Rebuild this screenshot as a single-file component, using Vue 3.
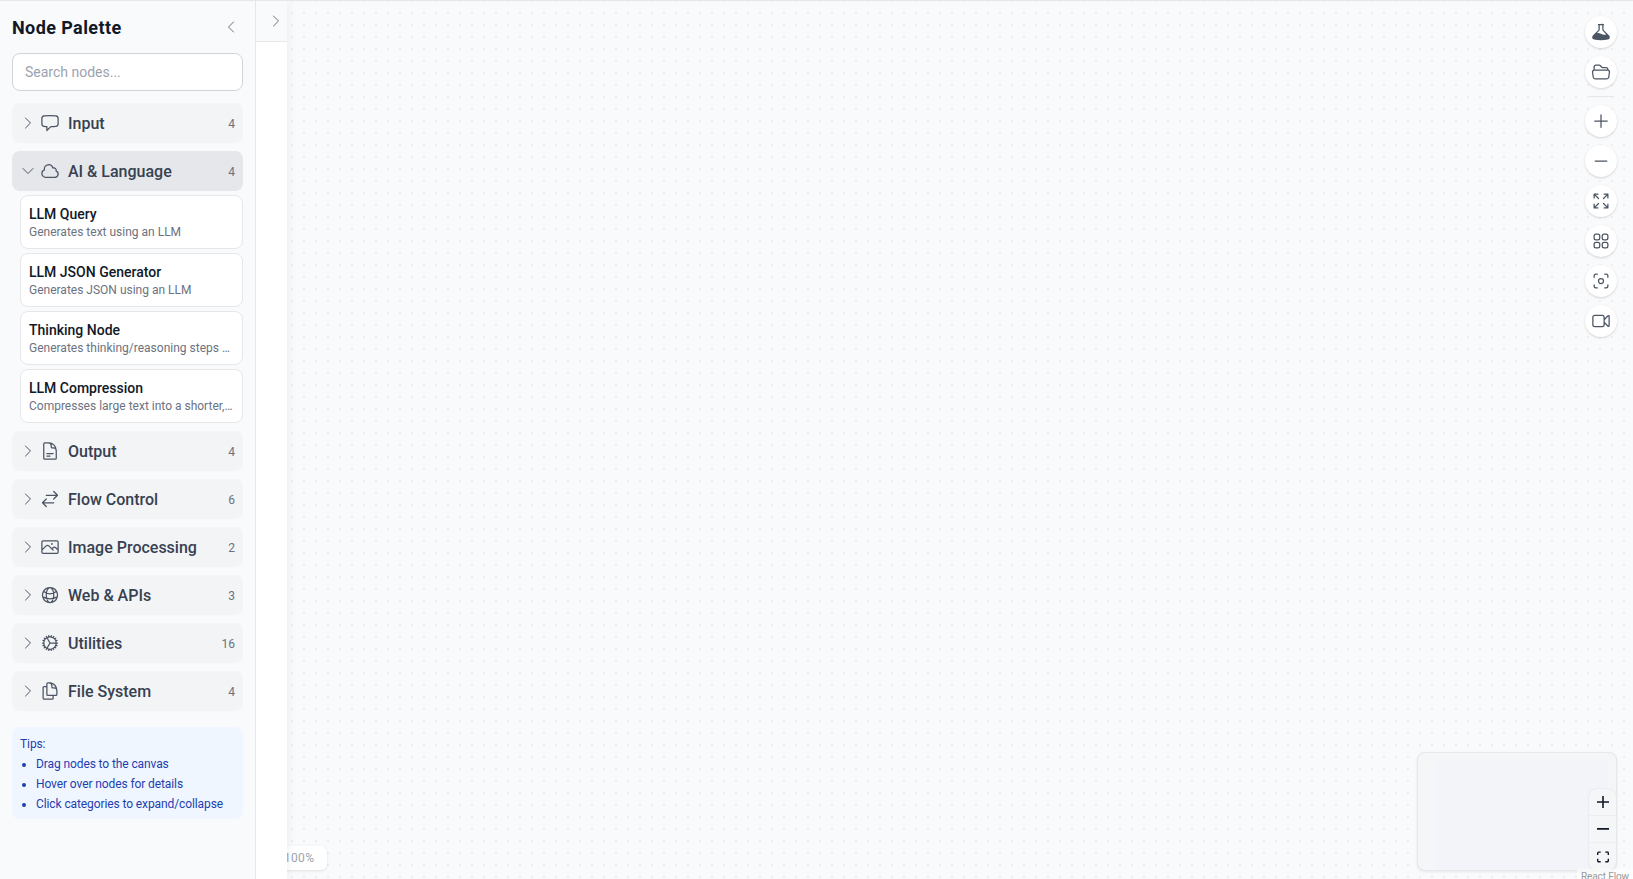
<template>
  <div class="app">
    <aside class="palette">
      <div class="palette-head">
        <h2>Node Palette</h2>
        <button class="collapse" type="button">
          <svg class="ico16" viewBox="0 0 24 24"><path :d="icons.left" /></svg>
        </button>
      </div>

      <input class="search" type="text" placeholder="Search nodes..." />

      <div class="cats">
        <section v-for="cat in categories" :key="cat.name" class="cat">
          <button class="cat-row" :class="{ open: openCat === cat.name }" type="button" @click="toggle(cat.name)">
            <svg class="ico16" viewBox="0 0 24 24"><path :d="openCat === cat.name ? icons.down : icons.right" /></svg>
            <svg class="ico20" viewBox="0 0 24 24"><path :d="cat.icon" /></svg>
            <span class="cat-name">{{ cat.name }}</span>
            <span class="cat-count">{{ cat.count }}</span>
          </button>
          <div v-if="openCat === cat.name && cat.nodes" class="nodes">
            <div v-for="n in cat.nodes" :key="n.title" class="node">
              <div class="node-title">{{ n.title }}</div>
              <div class="node-desc">{{ n.desc }}</div>
            </div>
          </div>
        </section>
      </div>

      <div class="tips">
        <div>Tips:</div>
        <ul>
          <li>Drag nodes to the canvas</li>
          <li>Hover over nodes for details</li>
          <li>Click categories to expand/collapse</li>
        </ul>
      </div>
    </aside>

    <main class="canvas">
      <div class="strip">
        <div class="strip-head">
          <svg class="ico16" viewBox="0 0 24 24"><path :d="icons.right" /></svg>
        </div>
      </div>

      <div class="tools">
        <template v-for="t in tools" :key="t.name">
          <div v-if="t.divider" class="tool-sep"></div>
          <button class="tool" type="button" :title="t.name">
            <svg class="ico20" :class="{ solid: t.solid }" viewBox="0 0 24 24"><path :d="t.d" fill-rule="evenodd" clip-rule="evenodd" /></svg>
          </button>
        </template>
      </div>

      <div class="zoom-badge">100%</div>

      <div class="minimap">
        <div class="minimap-view"></div>
        <div class="mini-ctrl">
          <button type="button">
            <svg viewBox="0 0 32 32"><path d="M32 18.133H18.133V32h-4.266V18.133H0v-4.266h13.867V0h4.266v13.867H32z" /></svg>
          </button>
          <button type="button">
            <svg viewBox="0 0 32 5"><path d="M0 0h32v4.2H0z" /></svg>
          </button>
          <button type="button">
            <svg viewBox="0 0 32 30"><path d="M3.692 4.63c0-.53.4-.938.939-.938h5.215V0H4.708C2.13 0 0 2.054 0 4.63v5.216h3.692V4.631zM27.354 0h-5.2v3.692h5.17c.53 0 .984.4.984.939v5.215H32V4.631A4.624 4.624 0 0 0 27.354 0zm.954 24.83c0 .532-.4.94-.939.94h-5.215v3.768h5.215c2.577 0 4.631-2.13 4.631-4.707v-5.139h-3.692v5.139zm-23.677.94c-.531 0-.939-.4-.939-.94v-5.138H0v5.139c0 2.577 2.13 4.707 4.708 4.707h5.138V25.77H4.631z" /></svg>
          </button>
        </div>
      </div>

      <div class="attribution">React Flow</div>
    </main>
  </div>
</template>

<script setup>
import { ref } from 'vue'

const icons = {
  left: 'M15.75 19.5 8.25 12l7.5-7.5',
  right: 'm8.25 4.5 7.5 7.5-7.5 7.5',
  down: 'm19.5 8.25-7.5 7.5-7.5-7.5',
}

const categories = [
  { name: 'Input', count: 4, icon: 'M2.25 12.76c0 1.6 1.123 2.994 2.707 3.227 1.087.16 2.185.283 3.293.369V21l4.076-4.076a1.526 1.526 0 0 1 1.037-.443 48.282 48.282 0 0 0 5.68-.494c1.584-.233 2.707-1.626 2.707-3.228V6.741c0-1.602-1.123-2.995-2.707-3.228A48.394 48.394 0 0 0 12 3c-2.392 0-4.744.175-7.043.513C3.373 3.746 2.25 5.14 2.25 6.741v6.018Z' },
  {
    name: 'AI & Language', count: 4,
    icon: 'M2.25 15a4.5 4.5 0 0 0 4.5 4.5H18a3.75 3.75 0 0 0 1.332-7.257 3 3 0 0 0-3.758-3.848 5.25 5.25 0 0 0-10.233 2.33A4.502 4.502 0 0 0 2.25 15Z',
    nodes: [
      { title: 'LLM Query', desc: 'Generates text using an LLM' },
      { title: 'LLM JSON Generator', desc: 'Generates JSON using an LLM' },
      { title: 'Thinking Node', desc: 'Generates thinking/reasoning steps using an LLM' },
      { title: 'LLM Compression', desc: 'Compresses large text into a shorter, denser form' },
    ],
  },
  { name: 'Output', count: 4, icon: 'M19.5 14.25v-2.625a3.375 3.375 0 0 0-3.375-3.375h-1.5A1.125 1.125 0 0 1 13.5 7.125v-1.5a3.375 3.375 0 0 0-3.375-3.375H8.25m0 12.75h7.5m-7.5 3H12M10.5 2.25H5.625c-.621 0-1.125.504-1.125 1.125v17.25c0 .621.504 1.125 1.125 1.125h12.75c.621 0 1.125-.504 1.125-1.125V11.25a9 9 0 0 0-9-9Z' },
  { name: 'Flow Control', count: 6, icon: 'M7.5 21 3 16.5m0 0L7.5 12M3 16.5h13.5m0-13.5L21 7.5m0 0L16.5 12M21 7.5H7.5' },
  { name: 'Image Processing', count: 2, icon: 'm2.25 15.75 5.159-5.159a2.25 2.25 0 0 1 3.182 0l5.159 5.159m-1.5-1.5 1.409-1.409a2.25 2.25 0 0 1 3.182 0l2.909 2.909m-18 3.75h16.5a1.5 1.5 0 0 0 1.5-1.5V6a1.5 1.5 0 0 0-1.5-1.5H3.75A1.5 1.5 0 0 0 2.25 6v12a1.5 1.5 0 0 0 1.5 1.5Zm10.5-11.25h.008v.008h-.008V8.25Zm.375 0a.375.375 0 1 1-.75 0 .375.375 0 0 1 .75 0Z' },
  { name: 'Web & APIs', count: 3, icon: 'M12 21a9.004 9.004 0 0 0 8.716-6.747M12 21a9.004 9.004 0 0 1-8.716-6.747M12 21c2.485 0 4.5-4.03 4.5-9S14.485 3 12 3m0 18c-2.485 0-4.5-4.03-4.5-9S9.515 3 12 3m0 0a8.997 8.997 0 0 1 7.843 4.582M12 3a8.997 8.997 0 0 0-7.843 4.582m15.686 0A11.953 11.953 0 0 1 12 10.5c-2.998 0-5.74-1.1-7.843-2.918m15.686 0A8.959 8.959 0 0 1 21 12c0 .778-.099 1.533-.284 2.253m0 0A17.919 17.919 0 0 1 12 16.5c-3.162 0-6.133-.815-8.716-2.247m0 0A9.015 9.015 0 0 1 3 12c0-1.605.42-3.113 1.157-4.418' },
  { name: 'Utilities', count: 16, icon: 'M4.5 12a7.5 7.5 0 0 0 15 0m-15 0a7.5 7.5 0 1 1 15 0m-15 0H3m16.5 0H21m-1.5 0H12m-8.457 3.077 1.41-.513m14.095-5.13 1.41-.513M5.106 17.785l1.15-.964m11.49-9.642 1.149-.964M7.501 19.795l.75-1.3m7.5-12.99.75-1.3m-6.063 16.658.26-1.477m2.605-14.772.26-1.477m0 17.726-.26-1.477M10.698 4.614l-.26-1.477M16.5 19.794l-.75-1.299M7.5 4.205 12 12m6.894 5.785-1.149-.964M6.256 7.178l-1.15-.964m15.352 8.864-1.41-.513M4.954 9.435l-1.41-.514M12.002 12l-3.75 6.495' },
  { name: 'File System', count: 4, icon: 'M15.75 17.25v3.375c0 .621-.504 1.125-1.125 1.125h-9.75a1.125 1.125 0 0 1-1.125-1.125V7.875c0-.621.504-1.125 1.125-1.125H6.75a9.06 9.06 0 0 1 1.5.124m7.5 10.376h3.375c.621 0 1.125-.504 1.125-1.125V11.25c0-4.46-3.243-8.161-7.5-8.876a9.06 9.06 0 0 0-1.5-.124H9.375c-.621 0-1.125.504-1.125 1.125v3.5m7.5 10.375H9.375a1.125 1.125 0 0 1-1.125-1.125v-9.25m12 6.625v-1.875a3.375 3.375 0 0 0-3.375-3.375h-1.5a1.125 1.125 0 0 1-1.125-1.125v-1.5a3.375 3.375 0 0 0-3.375-3.375H9.75' },
]

const tools = [
  { name: 'Test', solid: true, d: 'M10.5 3.798v5.02a3 3 0 0 1-.879 2.121l-2.377 2.377a9.845 9.845 0 0 1 5.091 1.013 8.315 8.315 0 0 0 5.713.636l.285-.071-3.954-3.955a3 3 0 0 1-.879-2.121v-5.02a23.614 23.614 0 0 0-3 0Zm4.5.138a.75.75 0 0 0 .093-1.495A24.837 24.837 0 0 0 12 2.25a25.048 25.048 0 0 0-3.093.191A.75.75 0 0 0 9 3.936v4.882a1.5 1.5 0 0 1-.44 1.06l-6.293 6.294c-1.62 1.621-.903 4.475 1.471 4.88 2.686.46 5.447.698 8.262.698 2.816 0 5.576-.239 8.262-.697 2.373-.406 3.092-3.26 1.47-4.881L15.44 9.879A1.5 1.5 0 0 1 15 8.818V3.936Z' },
  { name: 'Open', d: 'M3.75 9.776c.112-.017.227-.026.344-.026h15.812c.117 0 .232.009.344.026m-16.5 0a2.25 2.25 0 0 0-1.883 2.542l.857 6a2.25 2.25 0 0 0 2.227 1.932H19.05a2.25 2.25 0 0 0 2.227-1.932l.857-6a2.25 2.25 0 0 0-1.883-2.542m-16.5 0V6A2.25 2.25 0 0 1 6 3.75h3.879a1.5 1.5 0 0 1 1.06.44l2.122 2.12a1.5 1.5 0 0 0 1.06.44H18A2.25 2.25 0 0 1 20.25 9v.776' },
  { name: 'Zoom in', divider: true, d: 'M12 4.5v15m7.5-7.5h-15' },
  { name: 'Zoom out', d: 'M5 12h14' },
  { name: 'Fit view', d: 'M3.75 3.75v4.5m0-4.5h4.5m-4.5 0L9 9M3.75 20.25v-4.5m0 4.5h4.5m-4.5 0L9 15M20.25 3.75h-4.5m4.5 0v4.5m0-4.5L15 9m5.25 11.25h-4.5m4.5 0v-4.5m0 4.5L15 15' },
  { name: 'Layout', d: 'M3.75 6A2.25 2.25 0 0 1 6 3.75h2.25A2.25 2.25 0 0 1 10.5 6v2.25a2.25 2.25 0 0 1-2.25 2.25H6a2.25 2.25 0 0 1-2.25-2.25V6ZM3.75 15.75A2.25 2.25 0 0 1 6 13.5h2.25a2.25 2.25 0 0 1 2.25 2.25V18a2.25 2.25 0 0 1-2.25 2.25H6A2.25 2.25 0 0 1 3.75 18v-2.25ZM13.5 6a2.25 2.25 0 0 1 2.25-2.25H18A2.25 2.25 0 0 1 20.25 6v2.25A2.25 2.25 0 0 1 18 10.5h-2.25a2.25 2.25 0 0 1-2.25-2.25V6ZM13.5 15.75a2.25 2.25 0 0 1 2.25-2.25H18a2.25 2.25 0 0 1 2.25 2.25V18A2.25 2.25 0 0 1 18 20.25h-2.25A2.25 2.25 0 0 1 13.5 18v-2.25Z' },
  { name: 'Screenshot', d: 'M7.5 3.75H6A2.25 2.25 0 0 0 3.75 6v1.5M16.5 3.75H18A2.25 2.25 0 0 1 20.25 6v1.5m0 9V18A2.25 2.25 0 0 1 18 20.25h-1.5m-9 0H6A2.25 2.25 0 0 1 3.75 18v-1.5M15 12a3 3 0 1 1-6 0 3 3 0 0 1 6 0Z' },
  { name: 'Record', d: 'm15.75 10.5 4.72-4.72a.75.75 0 0 1 1.28.53v11.38a.75.75 0 0 1-1.28.53l-4.72-4.72M4.5 18.75h9a2.25 2.25 0 0 0 2.25-2.25v-9a2.25 2.25 0 0 0-2.25-2.25h-9A2.25 2.25 0 0 0 2.25 7.5v9a2.25 2.25 0 0 0 2.25 2.25Z' },
]

const openCat = ref('AI & Language')
function toggle(name){ openCat.value = openCat.value === name ? '' : name }
</script>

<style scoped>
.app{
  display: flex;
  height: 879px;
  overflow: hidden;
  border-top: 1px solid #e5e7eb;
  box-sizing: border-box;
  font-family: Roboto, "Liberation Sans", sans-serif;
}
button{ font-family: inherit; border: 0; background: none; padding: 0; cursor: pointer; }

svg path{ fill: none; stroke: currentColor; stroke-width: 1.5; stroke-linecap: round; stroke-linejoin: round; }
.ico16{ width: 16px; height: 16px; flex: none; display: block; }
.ico20{ width: 20px; height: 20px; flex: none; display: block; }
.ico20.solid path{ fill: currentColor; stroke: none; }

/* palette */
.palette{
  width: 256px;
  flex: none;
  box-sizing: border-box;
  padding: 12px;
  background: #f9fafb;
  border-right: 1px solid #e5e7eb;
}
.palette-head{ display: flex; align-items: center; justify-content: space-between; margin-bottom: 12px; }
.palette-head h2{ margin: 0; padding-top: 2px; font-size: 18px; line-height: 26px; font-weight: 700; letter-spacing: .4px; color: #111827; }
.collapse{ padding: 4px; color: #6b7280; border-radius: 6px; }
.search{
  display: block;
  width: 100%;
  box-sizing: border-box;
  height: 38px;
  padding: 8px 12px;
  margin-bottom: 12px;
  border: 1px solid #d1d5db;
  border-radius: 8px;
  background: #fff;
  font: 14px/20px Roboto, "Liberation Sans", sans-serif;
  color: #111827;
  outline: none;
}
.search::placeholder{ color: #9ca3af; opacity: 1; }

.cats{ display: flex; flex-direction: column; gap: 8px; }
.cat-row{
  width: 100%;
  height: 40px;
  display: flex;
  align-items: center;
  padding: 0 8px;
  border-radius: 8px;
  background: #f3f4f6;
  color: #4b5563;
}
.cat-row.open{ background: #e5e7eb; }
.cat-row .ico20{ margin-left: 4px; }
.cat-name{ margin-left: 8px; font-size: 16px; font-weight: 500; color: #374151; }
.cat-count{ margin-left: auto; padding-top: 1px; font-size: 12px; color: #6b7280; }

.nodes{ display: flex; flex-direction: column; gap: 4px; margin: 4px 0 0 8px; }
.node{
  padding: 8px;
  background: #fff;
  border: 1px solid #e5e7eb;
  border-radius: 8px;
  min-width: 0;
}
.node-title{ font-size: 14px; line-height: 20px; font-weight: 500; color: #111827; }
.node-desc{
  padding-top: 1px;
  font-size: 12px;
  line-height: 15px;
  color: #6b7280;
  white-space: nowrap;
  overflow: hidden;
  text-overflow: ellipsis;
}

.tips{
  margin-top: 16px;
  padding: 9px 8px 7px;
  background: #eff6ff;
  border-radius: 8px;
  font-size: 12px;
  line-height: 16px;
  letter-spacing: -.1px;
  color: #1e40af;
}
.tips ul{ margin: 4px 0 0; padding: 0 0 0 16px; list-style: disc; }
.tips li + li{ margin-top: 4px; }

/* canvas */
.canvas{
  position: relative;
  flex: 1;
  min-width: 0;
  overflow: hidden;
  background-color: #f9fafc;
  background-image: radial-gradient(circle at center, #eceef1 1px, transparent 1px);
  background-size: 12px 12px;
  background-position: -6px -6px;
}
.strip{
  position: absolute;
  left: 0;
  top: 0;
  bottom: 0;
  width: 31px;
  z-index: 2;
  background: #fff;
  box-shadow: 2px 0 8px rgba(0,0,0,.05);
}
.strip-head{
  height: 40px;
  padding: 0 0 0 12px;
  display: flex;
  align-items: center;
  background: #f9fafb;
  border-bottom: 1px solid #e5e7eb;
  color: #6b7280;
}

.tools{
  position: absolute;
  top: 15px;
  right: 16px;
  display: flex;
  flex-direction: column;
  align-items: center;
  gap: 8px;
}
.tool{
  width: 32px;
  height: 32px;
  display: flex;
  align-items: center;
  justify-content: center;
  border-radius: 50%;
  background: #fff;
  color: #4b5563;
  box-shadow: 0 1px 3px rgba(0,0,0,.1), 0 1px 2px rgba(0,0,0,.06);
}
.tool-sep{ width: 25px; height: 1px; background: #e5e7eb; }

.zoom-badge{
  position: absolute;
  left: 16px;
  bottom: 9px;
  padding: 4px 13px 4px 12px;
  font-size: 12px;
  line-height: 16px;
  letter-spacing: .3px;
  color: #9ca3af;
  background: #fff;
  border-radius: 6px;
  box-shadow: 0 1px 3px rgba(0,0,0,.1);
}

.minimap{
  position: absolute;
  right: 16px;
  bottom: 8px;
  width: 200px;
  height: 119px;
  box-sizing: border-box;
  background: #f5f6f8;
  border: 1px solid #e5e7eb;
  border-radius: 8px;
  box-shadow: 0 1px 3px rgba(0,0,0,.08);
  overflow: hidden;
}
.minimap-view{
  position: absolute;
  left: 18px;
  right: 8px;
  top: 8px;
  bottom: 0;
  background: #f2f4f9;
}
.mini-ctrl{
  position: absolute;
  right: 0;
  bottom: 0;
  width: 27px;
  display: flex;
  flex-direction: column;
  background: #f5f6f8;
  border-radius: 8px;
  box-shadow: 0 0 2px rgba(0,0,0,.12);
}
.mini-ctrl button{
  height: 27px;
  display: flex;
  align-items: center;
  justify-content: center;
  border-bottom: 1px solid #eceef1;
}
.mini-ctrl button:last-child{ border-bottom: 0; }
.mini-ctrl svg{ width: 12px; height: 12px; }
.mini-ctrl svg path{ fill: #111827; stroke: none; }

.attribution{
  position: absolute;
  right: 0;
  bottom: -6px;
  padding: 2px 4px;
  font-size: 10px;
  line-height: 12px;
  letter-spacing: -.1px;
  color: #999;
  background: rgba(255,255,255,.6);
}
</style>

<style>
html, body{ margin: 0; height: 100%; overflow: hidden; background: #f9fafb; }
</style>
